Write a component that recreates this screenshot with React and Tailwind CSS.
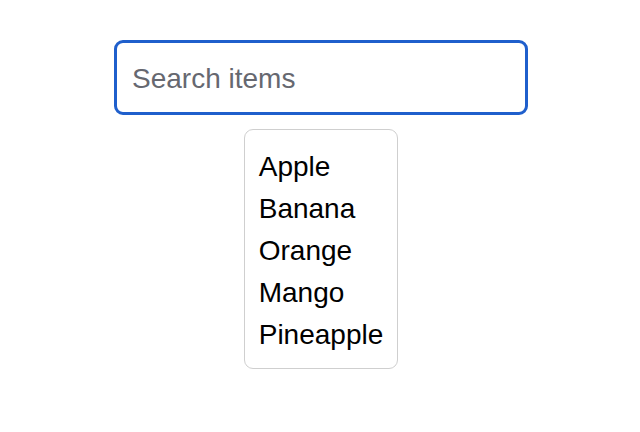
import React from 'react';

const items = ['Apple', 'Banana', 'Orange', 'Mango', 'Pineapple'];

export default function App() {
  return (
    <div className="min-h-[432px] w-full bg-white flex flex-col items-center pt-[40px] pl-[2px] font-['Liberation_Sans',Arial,sans-serif]">
      <input
        type="text"
        placeholder="Search items"
        className="w-[414px] h-[75px] rounded-[9px] border-[3px] border-[#1f5fcc] px-[15px] pt-[2px] text-[28px] text-black placeholder:text-[#666870] outline-none bg-white"
      />
      <ul className="mt-[14px] rounded-[9px] border border-[#cfcfcf] px-[14px] pt-[16px] pb-[12px] list-none bg-white">
        {items.map((item) => (
          <li key={item} className="text-[28px] leading-[42px] text-black">
            {item}
          </li>
        ))}
      </ul>
    </div>
  );
}
